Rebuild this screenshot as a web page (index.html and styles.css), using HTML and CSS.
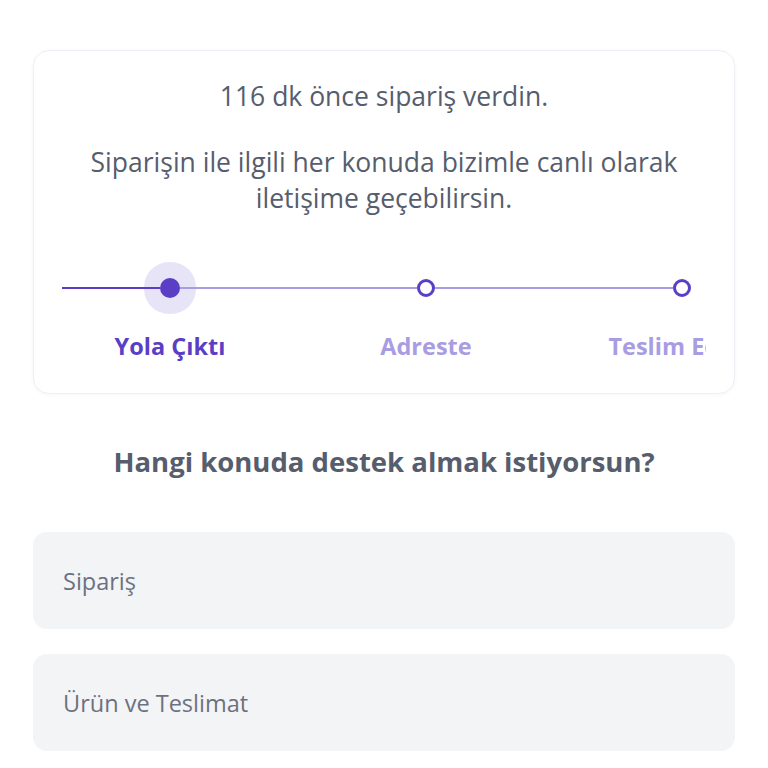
FILE: index.html
```html
<!DOCTYPE html>
<html lang="tr">
<head>
  <meta charset="UTF-8" />
  <meta name="viewport" content="width=device-width, initial-scale=1" />
  <title>Canlı Destek</title>
  <link rel="stylesheet" href="styles.css">
</head>
<body>
  <div class="container">
    <div class="order-card">
      <p class="order-time">116 dk önce sipariş verdin.</p>
      <p class="order-info">Siparişin ile ilgili her konuda bizimle canlı olarak iletişime geçebilirsin.</p>

      <div class="timeline">
        <div class="steps">
          <div class="step done">
            <div class="rail">
              <span class="seg seg-done"></span>
              <span class="dot dot-active"></span>
              <span class="seg"></span>
            </div>
            <div class="step-label">Yola Çıktı</div>
          </div>
          <div class="step">
            <div class="rail">
              <span class="seg"></span>
              <span class="dot"></span>
              <span class="seg"></span>
            </div>
            <div class="step-label">Adreste</div>
          </div>
          <div class="step">
            <div class="rail">
              <span class="seg"></span>
              <span class="dot"></span>
              <span class="seg seg-none"></span>
            </div>
            <div class="step-label">Teslim Edildi</div>
          </div>
        </div>
      </div>
    </div>

    <h2 class="topic-title">Hangi konuda destek almak istiyorsun?</h2>

    <div class="topic-list">
      <div class="topic">Sipariş</div>
      <div class="topic">Ürün ve Teslimat</div>
    </div>
  </div>
</body>
</html>
```

FILE: styles.css
```css
:root {
  --purple: #5a3ec6;
  --purple-soft: #a89ce2;
  --text-gray: #565d6d;
  --box-bg: #f3f4f6;
}
body {
  margin: 0;
  font-family: 'Open Sans', sans-serif;
  background: #fff;
  color: var(--text-gray);
}
.container {
  padding: 50px 33px 0;
}
.order-card {
  border: 1px solid #eeeef4;
  border-radius: 16px;
  box-shadow: 0 1px 4px rgba(40, 30, 90, 0.04);
  padding: 27px 28px 0;
  height: 315px;
  text-align: center;
}
.order-card p {
  margin: 0;
  font-size: 26.5px;
  line-height: 36px;
}
.order-info {
  margin-top: 30px !important;
  padding: 0 10px;
}
.timeline {
  margin-top: 46px;
  overflow: hidden;
}
.steps {
  display: flex;
  margin-left: -20px;
}
.step {
  flex: 0 0 256px;
  display: flex;
  flex-direction: column;
  align-items: center;
}
.rail {
  display: flex;
  align-items: center;
  width: 100%;
  height: 52px;
}
.seg {
  flex: 1;
  height: 2px;
  background: var(--purple-soft);
}
.seg-done {
  background: var(--purple);
}
.seg-none {
  background: transparent;
}
.dot {
  width: 12px;
  height: 12px;
  border: 3.5px solid var(--purple);
  border-radius: 50%;
  background: #fff;
}
.dot-active {
  width: 20px;
  height: 20px;
  border: 0;
  background: var(--purple);
  box-shadow: 0 0 0 16px rgba(90, 62, 198, 0.14);
}
.step-label {
  margin-top: 16px;
  font-size: 23.5px;
  font-weight: 700;
  color: var(--purple-soft);
  white-space: nowrap;
}
.step.done .step-label {
  color: var(--purple);
}
.topic-title {
  margin: 50px 0 0;
  text-align: center;
  font-size: 27.5px;
  line-height: 36px;
  font-weight: 700;
}
.topic-list {
  margin-top: 52px;
  display: flex;
  flex-direction: column;
  gap: 25px;
}
.topic {
  background: var(--box-bg);
  border-radius: 14px;
  height: 97px;
  display: flex;
  align-items: center;
  padding: 0 30px;
  font-size: 23.5px;
  color: #6b7180;
}
```
